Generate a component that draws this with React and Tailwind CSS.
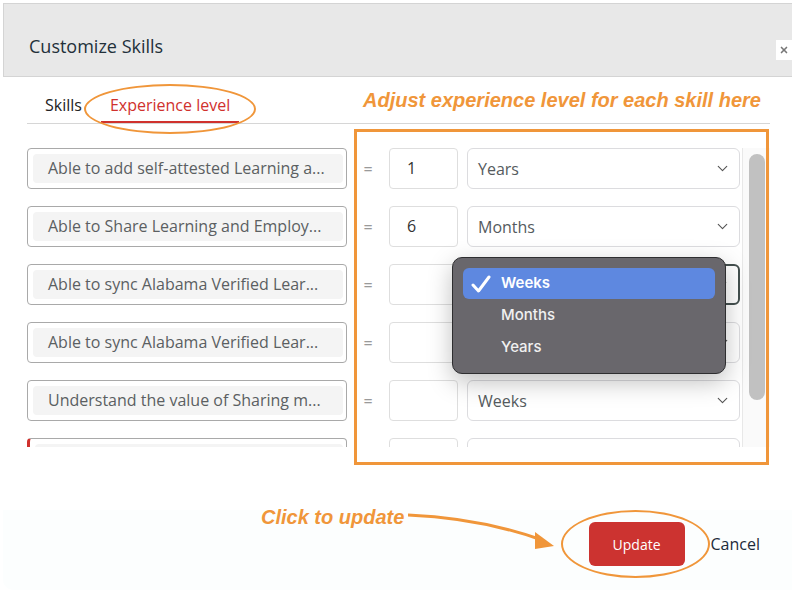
import React from 'react';
import { ChevronDown, X } from 'lucide-react';

const skills = [
  { label: 'Able to add self-attested Learning a...', value: '1', unit: 'Years' },
  { label: 'Able to Share Learning and Employ...', value: '6', unit: 'Months' },
  { label: 'Able to sync Alabama Verified Lear...', value: '', unit: '', chevron: true, focused: true },
  { label: 'Able to sync Alabama Verified Lear...', value: '', unit: '', chevron: true },
  { label: 'Understand the value of Sharing m...', value: '', unit: 'Weeks', chevron: true },
  { label: '', value: '', unit: '', invalid: true, last: true },
];

const SkillRow = ({ skill }) => (
  <div className="flex items-center h-[41px] shrink-0">
    <div
      className={`w-[320px] h-[41px] rounded-[4px] border border-[#a9a9a9] pl-[5px] pr-[3px] pt-[5px] ${
        skill.invalid ? 'border-l-[3px] border-l-[#d0312d] pl-[3px]' : ''
      }`}
    >
      <div className="h-[29px] rounded-[4px] bg-[#f4f4f4] px-[15px] text-[16px] leading-[29px] text-[#5b5f62] whitespace-nowrap">
        {skill.label}
      </div>
    </div>
    <div className="w-[42px] text-center text-[16px] text-[#9a9a9a]">{skill.last ? '' : '='}</div>
    <div className="w-[69px] h-[41px] rounded-[4px] border border-[#dedede] pl-[17px] text-[16px] leading-[39px] text-[#333]">
      {skill.value}
    </div>
    <div
      className={`ml-[9px] w-[273px] h-[41px] rounded-[6px] flex items-center justify-between pl-[10px] pr-[8px] text-[16px] text-[#555b5e] ${
        skill.focused ? 'border-2 border-[#44504f]' : 'border border-[#dcdcdf]'
      }`}
    >
      <span>{skill.unit}</span>
      {(skill.unit || skill.chevron) && <ChevronDown size={17} strokeWidth={1.6} className="text-[#555]" />}
    </div>
  </div>
);

export default function App() {
  return (
    <div
      className="relative w-[792px] h-[590px] overflow-hidden bg-white pt-[3px] pl-[3px]"
      style={{ fontFamily: '"Open Sans", "Noto Sans", sans-serif' }}
    >
      {/* header */}
      <div className="relative h-[74px] bg-[#e8e8e8] border-t border-b border-l border-[#d4d4d4] pl-[25px] pt-[30px]">
        <h2 className="text-[18px] leading-[24px] text-[#22303a]">Customize Skills</h2>
        <div className="absolute right-0 top-[36px] w-[16px] h-[20px] bg-white flex items-center justify-center">
          <X size={10} strokeWidth={4} className="text-[#777]" />
        </div>
      </div>

      {/* tabs */}
      <div className="ml-[24px] w-[743px] h-[47px] border-b border-[#d6d6d6] flex items-end">
        <div className="ml-[9px] px-[9px] pb-[8px] text-[16px] leading-[20px] text-[#222]">Skills</div>
        <div className="ml-[10px] px-[9px] pb-[6px] text-[16px] leading-[20px] text-[#d0312d] border-b-2 border-[#d0312d]">
          Experience level
        </div>
      </div>

      {/* rows */}
      <div className="mt-[16px] ml-[24px] w-[743px] h-[307px] overflow-hidden flex">
        <div className="w-[715px] flex flex-col gap-[17px] pt-[8px]">
          {skills.map((s, i) => (
            <SkillRow key={i} skill={s} />
          ))}
        </div>
        <div className="w-[28px] mt-[8px] border-l border-[#e8e8e8] bg-[#fafafa]">
          <div className="mt-[6px] ml-[6px] w-[16px] h-[246px] rounded-full bg-[#c1c1c1]" />
        </div>
      </div>

      {/* footer */}
      <div className="mt-[63px] h-[80px] rounded-bl-[10px] bg-[#fcfefe] flex items-start justify-end pr-[32px] pt-[12px]">
        <button className="w-[96px] h-[44px] rounded-[6px] bg-[#cc3330] text-white text-[14px]">Update</button>
        <span className="ml-[26px] mt-[10px] text-[16px] leading-[24px] text-[#1c2b39]">Cancel</span>
      </div>

      {/* open select menu */}
      <div
        className="absolute left-[452px] top-[257px] w-[274px] h-[117px] rounded-[10px] bg-[#69676c] border border-[#2e2e30] p-[10px] shadow-[0_8px_24px_rgba(0,0,0,0.25)]"
        style={{ fontFamily: 'Inter, "Noto Sans", sans-serif' }}
      >
        <div className="h-[31px] rounded-[6px] bg-[#5e88e0] flex items-center pl-[8px] text-[15px] font-semibold text-white">
          <svg width="20" height="18" viewBox="0 0 20 18" className="mr-[10px]">
            <path d="M2 10 L7.5 16 L18 2" fill="none" stroke="white" strokeWidth="3" strokeLinecap="round" strokeLinejoin="round" />
          </svg>
          Weeks
        </div>
        <div className="h-[32px] flex items-center pl-[38px] text-[15px] font-medium text-[#f0f0f0]">Months</div>
        <div className="h-[32px] flex items-center pl-[38px] text-[15px] font-medium text-[#f0f0f0]">Years</div>
      </div>

      {/* annotations */}
      <div className="absolute left-[84px] top-[84px] w-[172px] h-[50px] rounded-[50%] border-2 border-[#f0963a]" />
      <div
        className="absolute left-[363px] top-[85px] text-[20px] font-bold italic text-[#f0963a] whitespace-nowrap"
        style={{ fontFamily: '"Liberation Sans", Arial, sans-serif' }}
      >
        Adjust experience level for each skill here
      </div>
      <div className="absolute left-[354px] top-[129px] w-[415px] h-[336px] border-[3px] border-[#f0963a]" />

      <div
        className="absolute left-[261px] top-[502px] text-[20px] font-bold italic text-[#f0963a] whitespace-nowrap"
        style={{ fontFamily: '"Liberation Sans", Arial, sans-serif' }}
      >
        Click to update
      </div>
      <svg className="absolute left-0 top-0" width="792" height="590" viewBox="0 0 792 590">
        <path d="M408 515 Q480 518 542 540" fill="none" stroke="#f0963a" strokeWidth="3" />
        <polygon points="554,546 535,532 535,549" fill="#f0963a" />
      </svg>
      <div className="absolute left-[561px] top-[510px] w-[149px] h-[68px] rounded-[50%] border-2 border-[#f0963a]" />
    </div>
  );
}
